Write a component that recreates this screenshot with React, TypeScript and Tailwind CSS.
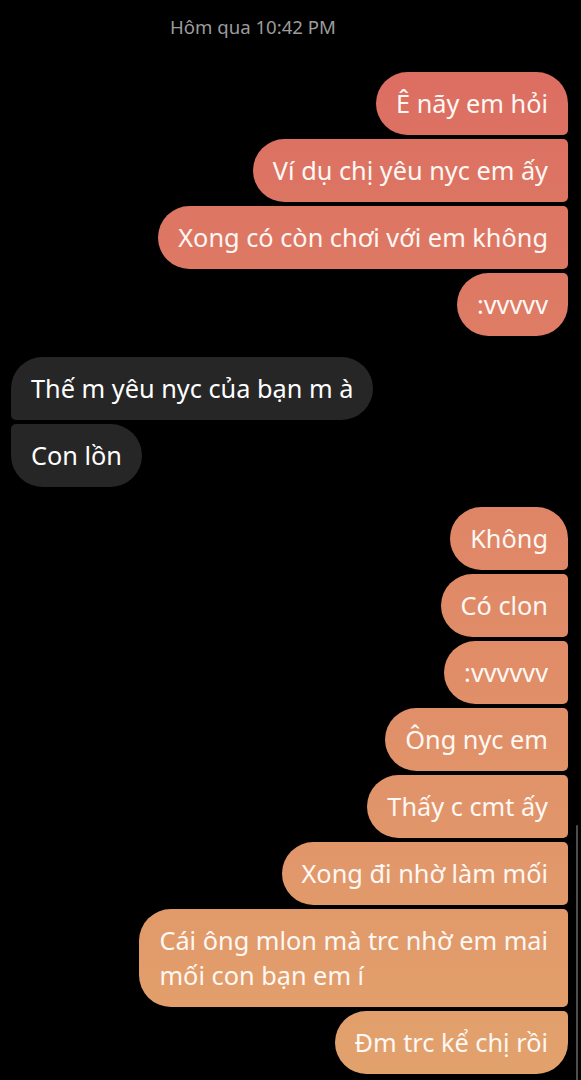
import React from "react";

type Msg = { text: React.ReactNode; shape: string };

const sentTop: Msg[] = [
  { text: "Ê nãy em hỏi", shape: "rounded-[32px] rounded-br-[5px]" },
  { text: "Ví dụ chị yêu nyc em ấy", shape: "rounded-l-[32px] rounded-r-[5px]" },
  { text: "Xong có còn chơi với em không", shape: "rounded-l-[32px] rounded-r-[5px]" },
  { text: ":vvvvv", shape: "rounded-[32px] rounded-tr-[5px]" },
];

const received: Msg[] = [
  { text: "Thế m yêu nyc của bạn m à", shape: "rounded-[32px] rounded-bl-[5px]" },
  { text: "Con lồn", shape: "rounded-[32px] rounded-tl-[5px]" },
];

const sentBottom: Msg[] = [
  { text: "Không", shape: "rounded-[32px] rounded-br-[5px]" },
  { text: "Có clon", shape: "rounded-l-[32px] rounded-r-[5px]" },
  { text: ":vvvvvv", shape: "rounded-l-[32px] rounded-r-[5px]" },
  { text: "Ông nyc em", shape: "rounded-l-[32px] rounded-r-[5px]" },
  { text: "Thấy c cmt ấy", shape: "rounded-l-[32px] rounded-r-[5px]" },
  { text: "Xong đi nhờ làm mối", shape: "rounded-l-[32px] rounded-r-[5px]" },
  {
    text: (
      <>
        Cái ông mlon mà trc nhờ em mai
        <br />
        mối con bạn em í
      </>
    ),
    shape: "rounded-l-[32px] rounded-r-[5px]",
  },
  { text: "Đm trc kể chị rồi", shape: "rounded-[32px] rounded-tr-[5px]" },
];

function Sent({ msg }: { msg: Msg }) {
  return (
    <div className="flex justify-end">
      <div
        className={`${msg.shape} bg-linear-to-b from-[#db6a61] to-[#e2a26c] bg-fixed px-[20px] py-[14px] text-[25.3px] leading-[35px] text-[#fff8f4]`}
      >
        {msg.text}
      </div>
    </div>
  );
}

function Received({ msg }: { msg: Msg }) {
  return (
    <div className="flex justify-start">
      <div
        className={`${msg.shape} bg-[#262626] px-[20px] py-[14px] text-[25.3px] leading-[35px] text-white`}
      >
        {msg.text}
      </div>
    </div>
  );
}

export default function App() {
  return (
    <div
      className="relative min-h-screen w-full overflow-hidden bg-black pl-[11px] pr-[13px]"
      style={{ fontFamily: '"Noto Sans", "DejaVu Sans", sans-serif' }}
    >
      <div className="flex h-[54px] items-center pl-[159px] text-[18.6px] text-[#9c9c9c]">
        Hôm qua 10:42 PM
      </div>

      <div className="mt-[18px] flex flex-col gap-[4px]">
        {sentTop.map((m, i) => (
          <Sent key={i} msg={m} />
        ))}
      </div>

      <div className="mt-[21px] flex flex-col gap-[4px]">
        {received.map((m, i) => (
          <Received key={i} msg={m} />
        ))}
      </div>

      <div className="mt-[20px] flex flex-col gap-[4px]">
        {sentBottom.map((m, i) => (
          <Sent key={i} msg={m} />
        ))}
      </div>

      <div className="absolute right-[3px] top-[825px] h-[260px] w-[2px] rounded-full bg-[#4d4d4d]" />
    </div>
  );
}
